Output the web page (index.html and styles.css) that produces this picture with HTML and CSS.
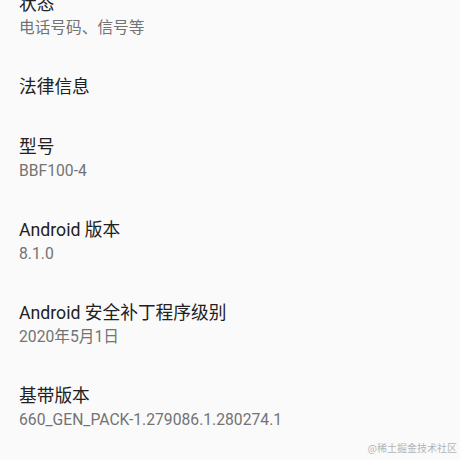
FILE: index.html
```html
<!DOCTYPE html>
<html lang="zh">
<head>
    <meta charset="UTF-8">
    <title>关于手机</title>
    <link rel="stylesheet" href="styles.css">
</head>
<body>
    <div class="list">
        <div class="item">
            <span class="title">状态</span>
            <span class="summary">电话号码、信号等</span>
        </div>
        <div class="item">
            <span class="title">法律信息</span>
        </div>
        <div class="item">
            <span class="title">型号</span>
            <span class="summary">BBF100-4</span>
        </div>
        <div class="item">
            <span class="title">Android 版本</span>
            <span class="summary">8.1.0</span>
        </div>
        <div class="item">
            <span class="title">Android 安全补丁程序级别</span>
            <span class="summary">2020年5月1日</span>
        </div>
        <div class="item">
            <span class="title">基带版本</span>
            <span class="summary">660_GEN_PACK-1.279086.1.280274.1</span>
        </div>
    </div>
    <span class="mark">@稀土掘金技术社区</span>
</body>
</html>
```

FILE: styles.css
```css
html, body {
    margin: 0;
    height: 100%;
    overflow: hidden;
}
body {
    background-color: #fafafa;
    font-family: Roboto, "Noto Sans CJK SC", sans-serif;
    position: relative;
}
.list {
    margin-top: -26px;
}
.item {
    padding: 18px 19px;
}
.title {
    display: block;
    font-size: 17.7px;
    line-height: 24px;
    color: #212121;
}
.summary {
    display: block;
    font-size: 15.7px;
    line-height: 22px;
    margin-top: 1px;
    color: #737373;
}
.mark {
    position: absolute;
    right: 3px;
    bottom: 5px;
    font-size: 10px;
    color: #b5b5b5;
    font-family: "Noto Sans CJK SC", sans-serif;
}
```
